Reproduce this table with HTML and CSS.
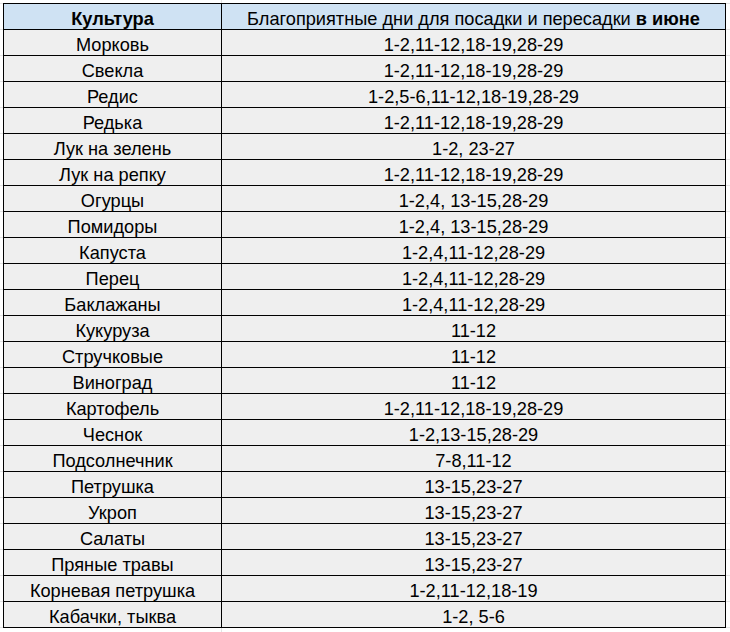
FILE: index.html
```html
<!DOCTYPE html>
<html lang="ru">
<head>
<meta charset="utf-8">
<title>Благоприятные дни</title>
<link rel="stylesheet" href="styles.css">
</head>
<body>
<div class="sheet">
  <div class="cell head"><b>Культура</b></div>
  <div class="cell head">Благоприятные дни для посадки и пересадки <b>в июне</b></div>
  <div class="cell">Морковь</div><div class="cell">1-2,11-12,18-19,28-29</div>
  <div class="cell">Свекла</div><div class="cell">1-2,11-12,18-19,28-29</div>
  <div class="cell">Редис</div><div class="cell">1-2,5-6,11-12,18-19,28-29</div>
  <div class="cell">Редька</div><div class="cell">1-2,11-12,18-19,28-29</div>
  <div class="cell">Лук на зелень</div><div class="cell">1-2, 23-27</div>
  <div class="cell">Лук на репку</div><div class="cell">1-2,11-12,18-19,28-29</div>
  <div class="cell">Огурцы</div><div class="cell">1-2,4, 13-15,28-29</div>
  <div class="cell">Помидоры</div><div class="cell">1-2,4, 13-15,28-29</div>
  <div class="cell">Капуста</div><div class="cell">1-2,4,11-12,28-29</div>
  <div class="cell">Перец</div><div class="cell">1-2,4,11-12,28-29</div>
  <div class="cell">Баклажаны</div><div class="cell">1-2,4,11-12,28-29</div>
  <div class="cell">Кукуруза</div><div class="cell">11-12</div>
  <div class="cell">Стручковые</div><div class="cell">11-12</div>
  <div class="cell">Виноград</div><div class="cell">11-12</div>
  <div class="cell">Картофель</div><div class="cell">1-2,11-12,18-19,28-29</div>
  <div class="cell">Чеснок</div><div class="cell">1-2,13-15,28-29</div>
  <div class="cell">Подсолнечник</div><div class="cell">7-8,11-12</div>
  <div class="cell">Петрушка</div><div class="cell">13-15,23-27</div>
  <div class="cell">Укроп</div><div class="cell">13-15,23-27</div>
  <div class="cell">Салаты</div><div class="cell">13-15,23-27</div>
  <div class="cell">Пряные травы</div><div class="cell">13-15,23-27</div>
  <div class="cell">Корневая петрушка</div><div class="cell">1-2,11-12,18-19</div>
  <div class="cell">Кабачки, тыква</div><div class="cell">1-2, 5-6</div>
</div>
</body>
</html>
```
FILE: styles.css
```css
html {
  background-color: #fff;
  background-image:
    linear-gradient(90deg, transparent 221px, #e4e4e4 221px, #e4e4e4 222px, transparent 222px),
    repeating-linear-gradient(180deg, #e4e4e4 0, #e4e4e4 1px, transparent 1px, transparent 26px);
  background-position: 0 0, 0 3px;
  min-height: 100%;
}
body {
  margin: 0;
  padding: 3px;
  font-family: "Liberation Sans", Arial, sans-serif;
  font-size: 18.2px;
  line-height: 20px;
  color: #000;
}
.sheet {
  display: grid;
  grid-template-columns: 218px 504px;
  grid-auto-rows: 26px;
  width: max-content;
  border-left: 1px solid #000;
  border-top: 1px solid #000;
  background: #efefef;
}
.cell {
  box-sizing: border-box;
  border-right: 1px solid #000;
  border-bottom: 1px solid #000;
  display: flex;
  align-items: flex-end;
  justify-content: center;
  white-space: pre;
  overflow: hidden;
}
.head {
  background: #cfe2f3;
}
.head b {
  font-weight: bold;
}
```
